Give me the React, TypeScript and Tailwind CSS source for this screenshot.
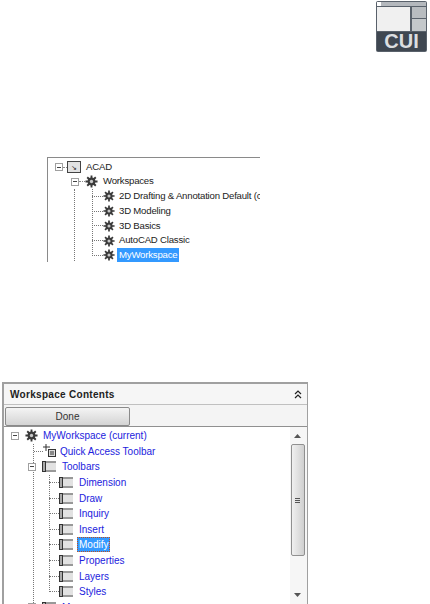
const FONT = "font-['Liberation_Sans',Arial,sans-serif]";

function Gear({ className = "h-[13px] w-[13px]" }: { className?: string }) {
  return (
    <svg viewBox="0 0 14 14" className={`shrink-0 ${className}`}>
      <path d="M7 0.5V13.5M0.5 7H13.5M2.4 2.4L11.6 11.6M11.6 2.4L2.4 11.6" stroke="#3a3a3a" strokeWidth="2" />
      <circle cx="7" cy="7" r="4.2" fill="#3a3a3a" />
      <circle cx="7" cy="7" r="1.8" fill="#c8c8c8" />
    </svg>
  );
}

function ToolbarIcon({ className = "" }: { className?: string }) {
  return (
    <svg viewBox="0 0 15 11" className={`h-[11px] w-[15px] shrink-0 ${className}`}>
      <rect x="0" y="0" width="4" height="11" fill="#333" />
      <rect x="1" y="1" width="2" height="9" fill="#aaa" />
      <rect x="4" y="2" width="10" height="7" fill="#e2e2e2" />
      <path d="M4 1H14M4 10H14" stroke="#333" strokeWidth="1" />
    </svg>
  );
}

function Expander({ className = "" }: { className?: string }) {
  return (
    <div className={`flex h-[8px] w-[8px] shrink-0 items-center justify-center border border-[#a0a0a0] bg-white ${className}`}>
      <div className="h-px w-[4px] bg-[#444]" />
    </div>
  );
}

function CuiLogo() {
  return (
    <div className="flex h-[51px] w-[51px] flex-col rounded-[2px] bg-[#59616b] p-px">
      <div className="flex h-[4px] bg-[#b4b8bd]">
        <div className="w-[4px] bg-white" />
      </div>
      <div className="mt-px flex h-[25px] gap-[2px]">
        <div className="w-[33px] bg-[#f0f0f0]" />
        <div className="flex flex-1 flex-col gap-px">
          <div className="flex-1 bg-[#b8bcc0]" />
          <div className="flex-1 bg-[#c4c8cb]" />
        </div>
      </div>
      <div className="mt-px flex-1 bg-[#3f4751] text-center text-[20px] font-bold leading-[19px] text-[#dcdee0]">CUI</div>
    </div>
  );
}

const workspaces = ["2D Drafting & Annotation Default (c", "3D Modeling", "3D Basics", "AutoCAD Classic"];
const toolbars = ["Dimension", "Draw", "Inquiry", "Insert", "Modify", "Properties", "Layers", "Styles"];

function AcadTree() {
  return (
    <div className="ml-[47px] mt-[105px] h-[105px] w-[213px] overflow-hidden whitespace-nowrap border-l border-t border-[#8a8a8a] pt-[2px] text-[9.6px] tracking-[-0.2px] text-[#222]">
      <div className="flex h-[14px] items-center pl-[7px]">
        <Expander />
        <div className="w-[4px] shrink-0 border-t border-dotted border-[#888]" />
        <div className="flex h-[12px] w-[14px] shrink-0 items-center justify-center border border-[#444] bg-[#e2e2e2] text-[7px] leading-none">↘</div>
        <span className="ml-[5px]">ACAD</span>
      </div>
      <div className="flex h-[15px] items-center pl-[23px]">
        <Expander />
        <div className="w-[6px] shrink-0 border-t border-dotted border-[#888]" />
        <Gear />
        <span className="ml-[5px]">Workspaces</span>
      </div>
      <div className="ml-[26px] h-[80px] border-l border-dotted border-[#777]">
        <div className="relative ml-[17px]">
          <div className="absolute bottom-[7px] left-0 top-0 border-l border-dotted border-[#777]" />
          {workspaces.map((name) => (
            <div key={name} className="flex h-[14.75px] items-center">
              <div className="w-[11px] shrink-0 border-t border-dotted border-[#777]" />
              <Gear className="h-[12px] w-[12px]" />
              <span className="ml-[4px]">{name}</span>
            </div>
          ))}
          <div className="flex h-[14.75px] items-center">
            <div className="w-[11px] shrink-0 border-t border-dotted border-[#777]" />
            <Gear className="h-[12px] w-[12px]" />
            <span className="ml-[2px] bg-[#3399ff] px-[2px] leading-[14px] text-white">MyWorkspace</span>
          </div>
        </div>
      </div>
    </div>
  );
}

function Contents() {
  return (
    <div className="ml-[2px] mt-[120px] h-[222px] w-[306px] border-l-2 border-r border-t-2 border-[#a0a0a0] bg-[#fbfbfb]">
      <div className="flex h-[21px] items-center justify-between border-b border-[#c0c0c0] bg-[#f6f6f6] pl-[6px] pr-[5px]">
        <span className="text-[10px] font-bold tracking-[0.3px] text-[#222]">Workspace Contents</span>
        <svg viewBox="0 0 8 9" className="h-[9px] w-[8px]">
          <path d="M1 4L4 1L7 4M1 8L4 5L7 8" fill="none" stroke="#222" strokeWidth="1.2" />
        </svg>
      </div>
      <div className="flex h-[22px] items-start border-b border-[#909090] bg-[#f4f4f4] pl-px pt-[2px]">
        <button className="h-[19px] w-[125px] rounded-[2px] border border-[#8a8a8a] bg-gradient-to-b from-[#f4f4f4] to-[#d4d4d4] text-[10px] text-[#333]">Done</button>
      </div>
      <div className="flex h-[177px] overflow-hidden">
        <div className="min-w-0 flex-1 overflow-hidden whitespace-nowrap bg-white pt-px text-[10px] text-[#2222dd]">
          <div className="flex h-[15.6px] items-center pl-[7px]">
            <Expander />
            <Gear className="ml-[6px] h-[13px] w-[13px]" />
            <span className="ml-[5px]">MyWorkspace (current)</span>
          </div>
          <div className="ml-[29px] border-l border-dotted border-[#777]">
            <div className="flex h-[15.6px] items-center">
              <div className="w-[9px] shrink-0 border-t border-dotted border-[#777]" />
              <svg viewBox="0 0 14 14" className="h-[14px] w-[14px] shrink-0">
                <path d="M3 0V7M0 3H7" stroke="#333" />
                <rect x="5.5" y="5.5" width="7" height="7" fill="#ddd" stroke="#333" />
                <path d="M7 8H11M7 10H11" stroke="#333" />
              </svg>
              <span className="ml-[3px]">Quick Access Toolbar</span>
            </div>
            <div className="-ml-[6px] flex h-[15.6px] items-center">
              <Expander />
              <ToolbarIcon className="ml-[6px]" />
              <span className="ml-[5px]">Toolbars</span>
            </div>
            <div className="relative ml-[15px]">
              <div className="absolute bottom-[8px] left-0 top-0 border-l border-dotted border-[#777]" />
              {toolbars.map((name) => (
                <div key={name} className="flex h-[15.6px] items-center">
                  <div className="w-[10px] shrink-0 border-t border-dotted border-[#777]" />
                  <ToolbarIcon />
                  {name === "Modify" ? (
                    <span className="ml-[3px] border border-dotted border-[#c05020] bg-[#3399ff] px-px leading-[13px] text-white">{name}</span>
                  ) : (
                    <span className="ml-[5px]">{name}</span>
                  )}
                </div>
              ))}
            </div>
            <div className="-ml-[6px] flex h-[15.6px] items-center">
              <Expander />
              <ToolbarIcon className="ml-[6px]" />
              <span className="ml-[5px]">Menus</span>
            </div>
          </div>
        </div>
        <div className="flex w-[17px] shrink-0 flex-col items-center bg-[#f6f6f6] pr-[2px]">
          <svg viewBox="0 0 7 4" className="mt-[7px] h-[4px] w-[7px]"><path d="M0 4L3.5 0L7 4Z" fill="#555" /></svg>
          <div className="mt-[6px] flex h-[112px] w-[14px] flex-col items-center justify-center gap-px rounded-[2px] border border-[#909090] bg-gradient-to-r from-[#f0f0f0] to-[#d0d0d0]">
            <div className="h-px w-[5px] bg-[#555]" />
            <div className="h-px w-[5px] bg-[#555]" />
            <div className="h-px w-[5px] bg-[#555]" />
          </div>
          <svg viewBox="0 0 7 4" className="mb-[7px] mt-auto h-[4px] w-[7px]"><path d="M0 0L3.5 4L7 0Z" fill="#555" /></svg>
        </div>
      </div>
    </div>
  );
}

export default function App() {
  return (
    <div className={`h-[604px] w-[430px] overflow-hidden bg-white ${FONT}`}>
      <div className="flex justify-end pr-[3px] pt-px">
        <CuiLogo />
      </div>
      <AcadTree />
      <Contents />
    </div>
  );
}
